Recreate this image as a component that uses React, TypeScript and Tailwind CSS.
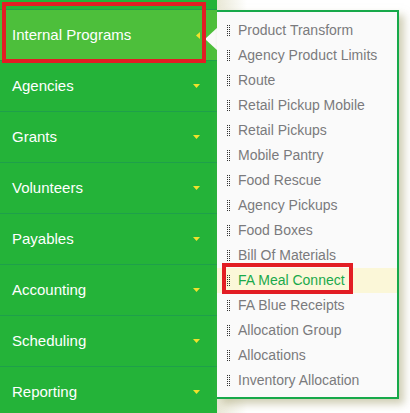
const menu = [
  'Internal Programs',
  'Agencies',
  'Grants',
  'Volunteers',
  'Payables',
  'Accounting',
  'Scheduling',
  'Reporting',
]

const subItems = [
  'Product Transform',
  'Agency Product Limits',
  'Route',
  'Retail Pickup Mobile',
  'Retail Pickups',
  'Mobile Pantry',
  'Food Rescue',
  'Agency Pickups',
  'Food Boxes',
  'Bill Of Materials',
  'FA Meal Connect',
  'FA Blue Receipts',
  'Allocation Group',
  'Allocations',
  'Inventory Allocation',
]

function Handle() {
  const dots = [0, 2, 4, 6, 8, 10]
  return (
    <svg width="4" height="11" viewBox="0 0 4 11" className="shrink-0">
      {dots.map((y) => (
        <g key={y} fill="#333">
          <rect x="0" y={y} width="1" height="1" />
          <rect x="2" y={y} width="1" height="1" />
        </g>
      ))}
    </svg>
  )
}

function CaretDown() {
  return (
    <svg width="7" height="4" viewBox="0 0 7 4">
      <path d="M0 0 H7 L3.5 4 Z" fill="#f2e12c" />
    </svg>
  )
}

function CaretLeft() {
  return (
    <svg width="4" height="7" viewBox="0 0 4 7">
      <path d="M4 0 V7 L0 3.5 Z" fill="#f2e12c" />
    </svg>
  )
}

export default function App() {
  return (
    <div className="relative w-[410px] h-[413px] overflow-hidden bg-white font-['Liberation_Sans',Arial,sans-serif]">
      <div className="flex h-full">
        {/* sidebar */}
        <div className="w-[217px] h-full bg-[#24b339] flex flex-col">
          <div className="h-[10px] shrink-0 border-b border-[#1ea04a]" />
          {menu.map((name, i) => (
            <div
              key={name}
              className={`h-[51px] shrink-0 flex items-center justify-between pl-3 pr-[17px] border-b border-[#1ea04a] ${
                i === 0 ? 'bg-[#4dbf3b]' : ''
              }`}
            >
              <span className="text-white text-[15px]">{name}</span>
              {i === 0 ? <CaretLeft /> : <CaretDown />}
            </div>
          ))}
        </div>
        <div className="flex-1 bg-[linear-gradient(90deg,#e9e8d6_0px,#ffffff_30px)]" />
      </div>

      {/* popup arrow */}
      <svg className="absolute left-[204px] top-[27px]" width="14" height="24" viewBox="0 0 14 24">
        <path d="M14 0 L1 12 L14 24 Z" fill="#fafafa" />
      </svg>

      {/* flyout submenu */}
      <div className="absolute left-[217px] top-[10px] w-[182px] border-t-2 border-r-2 border-b-2 border-[#17a94a] bg-[#fafafa] pt-[6px] pb-[4px] shadow-[5px_5px_8px_rgba(170,165,120,0.55)]">
        {subItems.map((item) => {
          const active = item === 'FA Meal Connect'
          return (
            <div
              key={item}
              className={`h-[25px] flex items-center gap-[7px] pl-[10px] ${active ? 'bg-[#fbf7d8]' : ''}`}
            >
              <Handle />
              <span className={`text-[14px] ${active ? 'text-[#19a94b]' : 'text-[#7a7a7d]'}`}>{item}</span>
            </div>
          )
        })}
      </div>

      {/* annotation boxes */}
      <div className="absolute left-[2px] top-[2px] w-[204px] h-[61px] border-4 border-[#e21d24]" />
      <div className="absolute left-[222px] top-[263px] w-[131px] h-[31px] border-4 border-[#e21d24]" />
    </div>
  )
}
